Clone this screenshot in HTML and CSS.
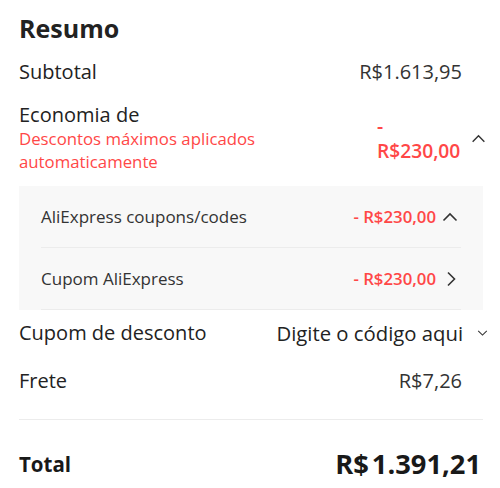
FILE: index.html
```html
<!DOCTYPE html>
<html lang="pt-BR">

<head>
    <meta charset="UTF-8">
    <meta name="viewport" content="width=device-width, initial-scale=1.0">
    <title>Resumo</title>
    <link rel="stylesheet" href="styles.css">
</head>

<body>
    <div class="summary">
        <h2 class="summary-title">Resumo</h2>

        <div class="row row-subtotal">
            <span class="label">Subtotal</span>
            <span class="value">R$1.613,95</span>
        </div>

        <!-- economia -->
        <div class="row row-saving">
            <div class="saving-text">
                <div class="label">Economia de</div>
                <div class="saving-note">Descontos máximos aplicados automaticamente</div>
            </div>
            <div class="saving-value">- R$230,00</div>
            <svg class="arrow arrow-up" viewBox="0 0 16 10"><path d="M1.5 8.5 L8 2 L14.5 8.5" /></svg>
        </div>

        <div class="coupons">
            <div class="coupon-row">
                <span class="coupon-name">AliExpress coupons/codes</span>
                <span class="coupon-value">- R$230,00</span>
                <svg class="arrow arrow-small-up" viewBox="0 0 16 10"><path d="M1.5 8.5 L8 2 L14.5 8.5" /></svg>
            </div>
            <div class="coupon-row">
                <span class="coupon-name">Cupom AliExpress</span>
                <span class="coupon-value">- R$230,00</span>
                <svg class="arrow arrow-right" viewBox="0 0 10 16"><path d="M2 1.5 L8.5 8 L2 14.5" /></svg>
            </div>
        </div>

        <div class="row row-code">
            <span class="label">Cupom de desconto</span>
            <span class="code-input">Digite o código aqui</span>
            <svg class="arrow arrow-down" viewBox="0 0 12 7"><path d="M1 1 L6 6 L11 1" /></svg>
        </div>

        <div class="row row-shipping">
            <span class="label">Frete</span>
            <span class="value">R$7,26</span>
        </div>

        <div class="row row-total">
            <span class="total-label">Total</span>
            <span class="total-value">R$<span class="total-num">1.391,21</span></span>
        </div>
    </div>
</body>

</html>
```

FILE: styles.css
```css
/* 页面 */
body {
    margin: 0;
    padding: 0;
    background: #fff;
    font-family: "Open Sans", "Noto Sans", sans-serif;
    color: #222;
}

.summary {
    padding: 12px 17px 0 19px;
}

.summary-title {
    margin: 0;
    font-size: 25px;
    line-height: 32px;
    font-weight: 700;
    color: #222;
}

.row {
    display: flex;
    align-items: center;
}

.label {
    font-size: 20px;
    line-height: 28px;
    color: #222;
}

.value {
    margin-left: auto;
    margin-right: 21px;
    font-size: 20px;
    line-height: 28px;
    color: #333;
}

.row-subtotal {
    margin-top: 14px;
}

/* 优惠 */
.row-saving {
    margin-top: 17px;
}

.row-saving .label {
    line-height: 24px;
}

.saving-text {
    flex: 1;
}

.saving-note {
    font-size: 16.8px;
    line-height: 23px;
    color: #ff4747;
}

.saving-value {
    width: 84px;
    margin-right: 10px;
    font-size: 19.2px;
    line-height: 25px;
    font-weight: 600;
    color: #ff4747;
}

.arrow {
    fill: none;
    stroke: #333;
    stroke-width: 1.6;
}

.arrow-up {
    width: 15px;
    height: 9px;
    margin-right: -3px;
}

/* 优惠券列表 */
.coupons {
    margin-top: 13px;
    background: #f8f8f8;
    padding: 0 22px;
}

.coupon-row {
    display: flex;
    align-items: center;
    height: 61px;
    border-bottom: 1px solid #ececec;
}

.coupon-name {
    flex: 1;
    font-size: 17px;
    color: #333;
}

.coupon-value {
    font-size: 16.8px;
    font-weight: 600;
    color: #ff4747;
}

.arrow-small-up {
    width: 16px;
    height: 10px;
    margin-left: 6px;
    margin-right: 3px;
}

.arrow-right {
    width: 10px;
    height: 16px;
    margin-left: 10px;
    margin-right: 5px;
}

.row-code {
    margin-top: 9px;
}

.code-input {
    margin-left: auto;
    font-size: 20.3px;
    line-height: 28px;
    color: #222;
}

.arrow-down {
    width: 11px;
    height: 6px;
    margin-left: 14px;
    margin-right: -5px;
    stroke-width: 1.2;
}

.row-shipping {
    margin-top: 20px;
    padding-bottom: 24px;
    border-bottom: 1px solid #ececec;
}

/* 合计 */
.row-total {
    padding-top: 26px;
}

.total-label {
    font-size: 20.5px;
    line-height: 36px;
    font-weight: 700;
    color: #191919;
}

.total-value {
    margin-left: auto;
    margin-right: 2px;
    font-size: 27.3px;
    line-height: 36px;
    font-weight: 700;
    color: #191919;
}

.total-num {
    margin-left: 3px;
}
```
